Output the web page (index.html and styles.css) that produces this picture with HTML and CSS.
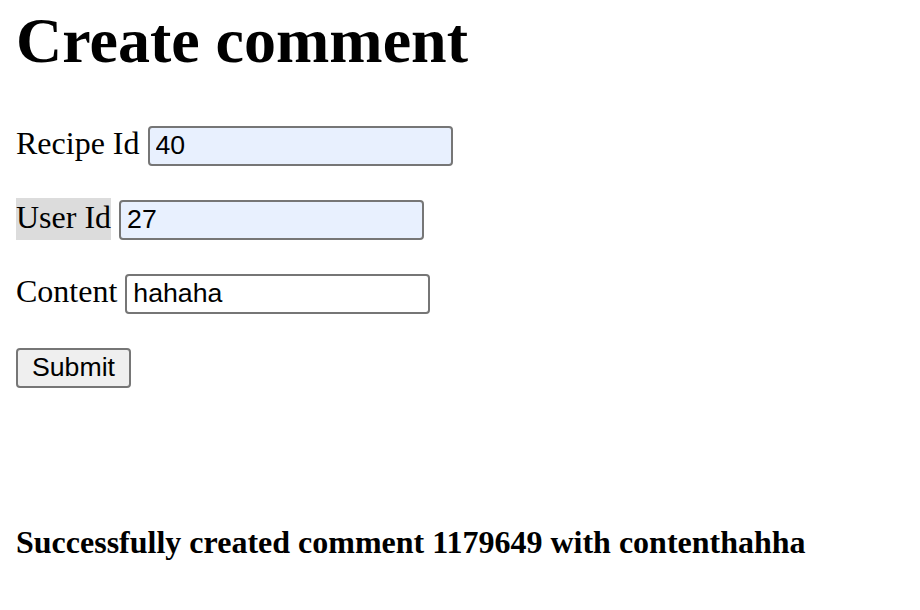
FILE: index.html
```html
<!DOCTYPE html>
<html lang="en">
<head>
<meta charset="utf-8">
<title>Create comment</title>
<link rel="stylesheet" href="styles.css">
</head>
<body>
<h1 class="title">Create comment</h1>
<form class="form">
  <div class="row">
    <label class="label" for="recipe">Recipe Id</label>
    <input class="field field-filled" id="recipe" type="text" value="40">
  </div>
  <div class="row">
    <label class="label label-hl" for="user">User Id</label>
    <input class="field field-filled" id="user" type="text" value="27">
  </div>
  <div class="row">
    <label class="label" for="content">Content</label>
    <input class="field" id="content" type="text" value="hahaha">
  </div>
  <div class="actions">
    <button class="btn" type="button">Submit</button>
  </div>
</form>
<h4 class="result">Successfully created comment 1179649 with contenthahha</h4>
</body>
</html>
```

FILE: styles.css
```css
html {
  background: #fff;
}

body {
  margin: 0;
  padding: 4px 16px 0;
  font-family: "Liberation Serif", "Times New Roman", serif;
  font-size: 32px;
  color: #000;
}

.title {
  font-size: 64px;
  font-weight: bold;
  line-height: 73px;
  margin: 0 0 47px;
}

.form {
  margin: 0;
}

.row {
  display: flex;
  align-items: baseline;
  gap: 8px;
  margin: 0 0 32px;
}

.label {
  display: inline-block;
  line-height: 36px;
  padding: 1px 0 5px;
}

.label-hl {
  background: #dcdcdc;
}

.field {
  box-sizing: border-box;
  width: 305px;
  height: 40px;
  margin: 0;
  padding: 0 6px;
  border: 2px solid #767676;
  border-radius: 4px;
  background: #fff;
  color: #000;
  font-family: "Liberation Sans", Arial, sans-serif;
  font-size: 26.67px;
  outline: none;
}

.field-filled {
  background: #e8f0fe;
}

.actions {
  padding-top: 1px;
}

.btn {
  box-sizing: border-box;
  height: 40px;
  margin: 0;
  padding: 0 14px;
  border: 2px solid #767676;
  border-radius: 4px;
  background: #efefef;
  color: #000;
  font-family: "Liberation Sans", Arial, sans-serif;
  font-size: 26.67px;
}

.result {
  font-size: 32px;
  font-weight: bold;
  margin: 136px 0 0;
}
```
